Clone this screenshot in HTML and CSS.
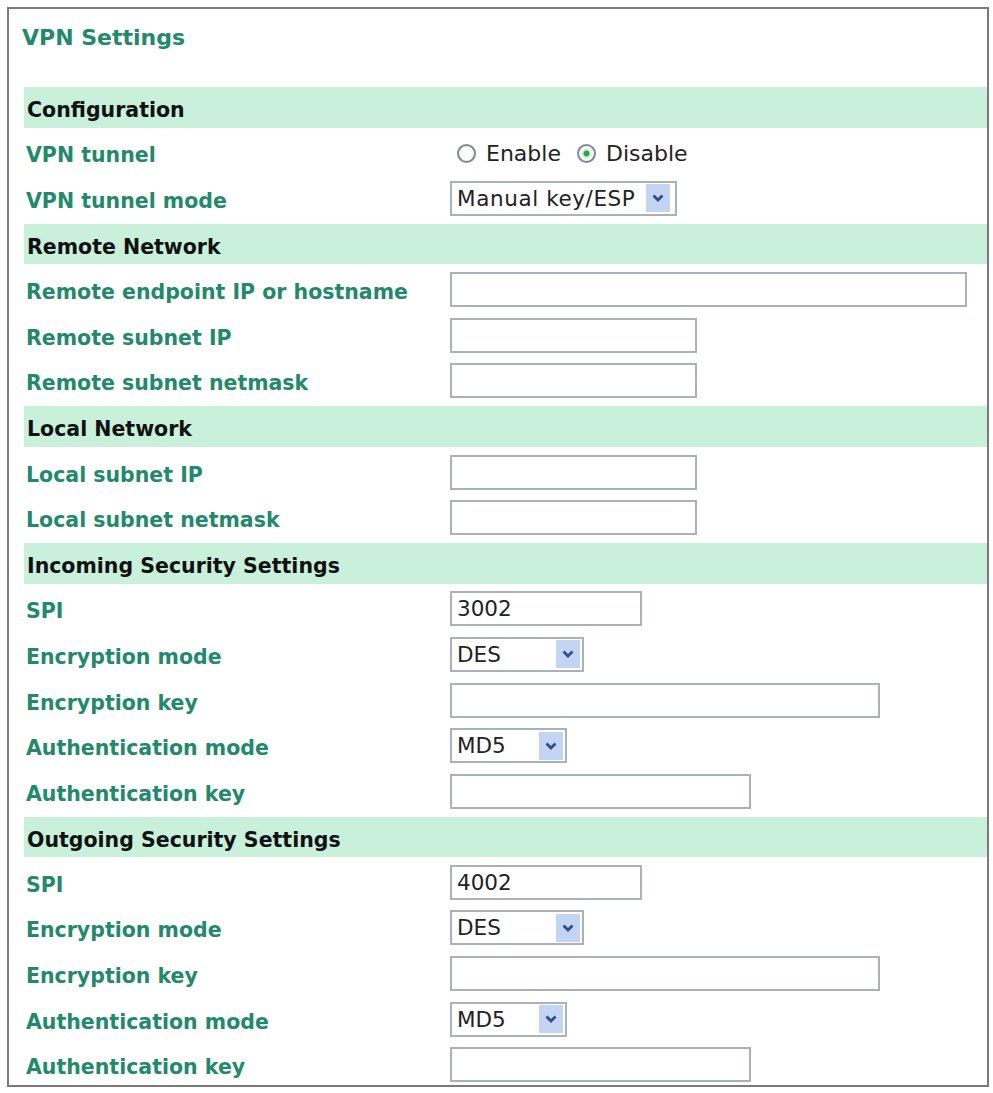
FILE: index.html
```html
<!DOCTYPE html>
<html lang="en">
<head>
    <meta charset="UTF-8">
    <title>VPN Settings</title>
    <link rel="stylesheet" href="styles.css">
</head>
<body>
    <div class="panel">
        <h2 class="title">VPN Settings</h2>

        <form class="settings" action="#" method="post">
            <div class="section">Configuration</div>
            <div class="row">
                <label>VPN tunnel</label>
                <div class="field">
                    <label class="radio"><input type="radio" name="tunnel" value="1">Enable</label>
                    <label class="radio"><input type="radio" name="tunnel" value="0" checked>Disable</label>
                </div>
            </div>
            <div class="row">
                <label for="mode">VPN tunnel mode</label>
                <div class="field">
                    <span class="select w-mode">
                        <select id="mode"><option>Manual key/ESP</option></select>
                        <span class="arrow"><svg width="12" height="8" viewBox="0 0 12 8"><path d="M1.5 1.5 L6 6 L10.5 1.5" fill="none" stroke="#2f4c8c" stroke-width="2.8"/></svg></span>
                    </span>
                </div>
            </div>

            <div class="section">Remote Network</div>
            <div class="row">
                <label for="remote-host">Remote endpoint IP or hostname</label>
                <div class="field"><input type="text" id="remote-host" class="w-xl"></div>
            </div>
            <div class="row">
                <label for="remote-ip">Remote subnet IP</label>
                <div class="field"><input type="text" id="remote-ip" class="w-md"></div>
            </div>
            <div class="row">
                <label for="remote-mask">Remote subnet netmask</label>
                <div class="field"><input type="text" id="remote-mask" class="w-md"></div>
            </div>

            <div class="section">Local Network</div>
            <div class="row">
                <label for="local-ip">Local subnet IP</label>
                <div class="field"><input type="text" id="local-ip" class="w-md"></div>
            </div>
            <div class="row">
                <label for="local-mask">Local subnet netmask</label>
                <div class="field"><input type="text" id="local-mask" class="w-md"></div>
            </div>

            <div class="section">Incoming Security Settings</div>
            <div class="row">
                <label for="in-spi">SPI</label>
                <div class="field"><input type="text" id="in-spi" class="w-sm" value="3002"></div>
            </div>
            <div class="row">
                <label for="in-enc">Encryption mode</label>
                <div class="field">
                    <span class="select w-des">
                        <select id="in-enc"><option>DES</option></select>
                        <span class="arrow"><svg width="12" height="8" viewBox="0 0 12 8"><path d="M1.5 1.5 L6 6 L10.5 1.5" fill="none" stroke="#2f4c8c" stroke-width="2.8"/></svg></span>
                    </span>
                </div>
            </div>
            <div class="row">
                <label for="in-key">Encryption key</label>
                <div class="field"><input type="text" id="in-key" class="w-lg"></div>
            </div>
            <div class="row">
                <label for="in-auth">Authentication mode</label>
                <div class="field">
                    <span class="select w-md5">
                        <select id="in-auth"><option>MD5</option></select>
                        <span class="arrow"><svg width="12" height="8" viewBox="0 0 12 8"><path d="M1.5 1.5 L6 6 L10.5 1.5" fill="none" stroke="#2f4c8c" stroke-width="2.8"/></svg></span>
                    </span>
                </div>
            </div>
            <div class="row">
                <label for="in-auth-key">Authentication key</label>
                <div class="field"><input type="text" id="in-auth-key" class="w-auth"></div>
            </div>

            <div class="section">Outgoing Security Settings</div>
            <div class="row">
                <label for="out-spi">SPI</label>
                <div class="field"><input type="text" id="out-spi" class="w-sm" value="4002"></div>
            </div>
            <div class="row">
                <label for="out-enc">Encryption mode</label>
                <div class="field">
                    <span class="select w-des">
                        <select id="out-enc"><option>DES</option></select>
                        <span class="arrow"><svg width="12" height="8" viewBox="0 0 12 8"><path d="M1.5 1.5 L6 6 L10.5 1.5" fill="none" stroke="#2f4c8c" stroke-width="2.8"/></svg></span>
                    </span>
                </div>
            </div>
            <div class="row">
                <label for="out-key">Encryption key</label>
                <div class="field"><input type="text" id="out-key" class="w-lg"></div>
            </div>
            <div class="row">
                <label for="out-auth">Authentication mode</label>
                <div class="field">
                    <span class="select w-md5">
                        <select id="out-auth"><option>MD5</option></select>
                        <span class="arrow"><svg width="12" height="8" viewBox="0 0 12 8"><path d="M1.5 1.5 L6 6 L10.5 1.5" fill="none" stroke="#2f4c8c" stroke-width="2.8"/></svg></span>
                    </span>
                </div>
            </div>
            <div class="row">
                <label for="out-auth-key">Authentication key</label>
                <div class="field"><input type="text" id="out-auth-key" class="w-auth"></div>
            </div>
        </form>
    </div>
</body>
</html>
```

FILE: styles.css
```css
body {
    margin: 0;
    background-color: #fff;
    font-family: 'DejaVu Sans', Verdana, sans-serif;
}

.panel {
    margin: 7px 0 0 7px;
    width: 982px;
    height: 1080px;
    border: 2px solid #7a7a7a;
    padding-left: 15px;
    box-sizing: border-box;
    overflow: hidden;
}

.title {
    margin: 0 0 0 -2px;
    padding-top: 16px;
    height: 26px;
    line-height: 26px;
    font-size: 22px;
    font-weight: bold;
    color: #22896a;
}

.settings {
    display: flex;
    flex-direction: column;
    gap: 5px;
    margin-top: 36px;
}

.section {
    height: 40.6px;
    line-height: 46px;
    padding-left: 3px;
    background-color: #c8f0da;
    font-size: 20.5px;
    font-weight: bold;
    color: #111;
}

.row {
    display: grid;
    grid-template-columns: 426px 1fr;
    align-items: center;
    height: 40.6px;
}

.row > label {
    padding-left: 2px;
    padding-top: 5px;
    font-size: 20.5px;
    font-weight: bold;
    color: #22896a;
}

.field {
    display: flex;
    align-items: center;
}

input[type="text"] {
    height: 35px;
    padding: 0 5px;
    border: 2px solid #abb1ba;
    box-sizing: border-box;
    font-family: 'DejaVu Sans', Verdana, sans-serif;
    font-size: 21.5px;
    color: #222;
    background-color: #fff;
    outline: none;
}

.w-sm { width: 192px; }
.w-md { width: 247px; }
.w-auth { width: 301px; }
.w-lg { width: 430px; }
.w-xl { width: 517px; }

.radio {
    display: flex;
    align-items: center;
    margin-right: 9px;
    padding-top: 2px;
    font-size: 22px;
    color: #222;
}

.radio input {
    appearance: none;
    width: 19px;
    height: 19px;
    margin: 0 10px 0 7px;
    border: 2px solid #7f8a93;
    border-radius: 50%;
    background: radial-gradient(circle, #fff 40%, #e4e7ea 100%);
    box-sizing: border-box;
}

.radio input:checked {
    background: radial-gradient(circle, #2aa64a 0 2.5px, #d6efd9 3.5px 4.5px, #fff 5.5px, #e4e7ea 100%);
}

.select {
    display: flex;
    align-items: center;
    height: 35px;
    padding-right: 2px;
    border: 2px solid #abb1ba;
    box-sizing: border-box;
    background-color: #fff;
}

.select select {
    flex: 1;
    min-width: 0;
    appearance: none;
    border: none;
    background: transparent;
    padding: 0 0 0 5px;
    font-family: 'DejaVu Sans', Verdana, sans-serif;
    font-size: 21.5px;
    color: #222;
    outline: none;
}

.arrow {
    display: flex;
    align-items: center;
    justify-content: center;
    width: 24px;
    height: 28px;
    background-color: #c4d5f3;
}

.w-mode { width: 227px; padding-right: 5px; }
.w-mode select { letter-spacing: 0.6px; }
.w-des { width: 134px; }
.w-md5 { width: 117px; }
```
